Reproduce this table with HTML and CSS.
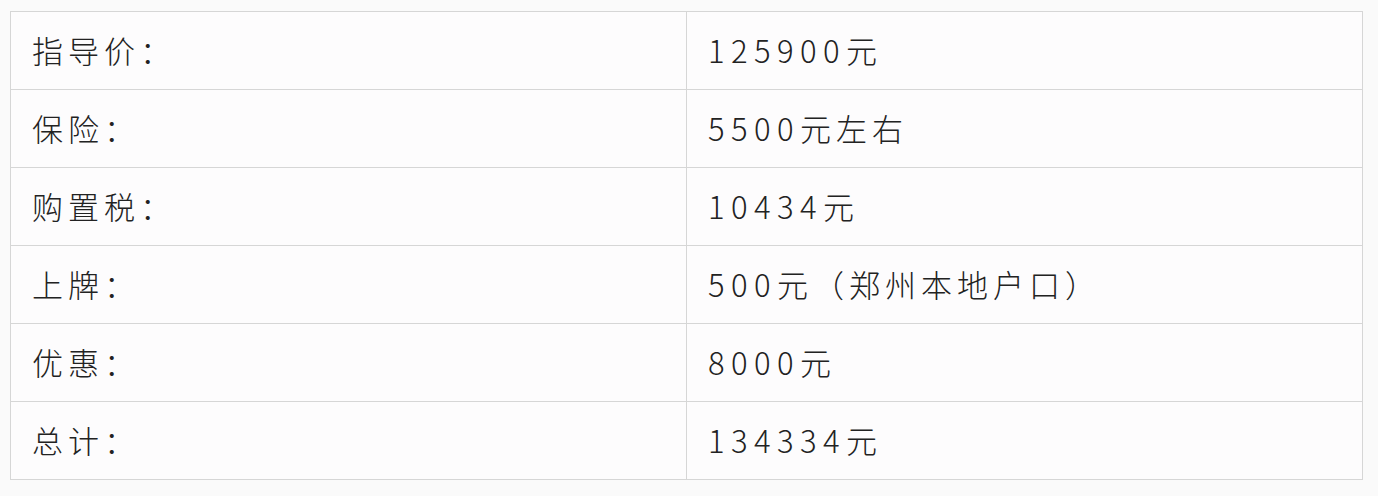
FILE: index.html
```html
<!DOCTYPE html>
<html lang="zh">
<head>
<meta charset="utf-8">
<link rel="stylesheet" href="styles.css">
</head>
<body>
<table class="price-table">
  <tbody>
    <tr><td class="label">指导价：</td><td class="value"><span class="num">125900</span>元</td></tr>
    <tr><td class="label">保险：</td><td class="value"><span class="num">5500</span>元左右</td></tr>
    <tr><td class="label">购置税：</td><td class="value"><span class="num">10434</span>元</td></tr>
    <tr><td class="label">上牌：</td><td class="value"><span class="num">500</span>元（郑州本地户口）</td></tr>
    <tr><td class="label">优惠：</td><td class="value"><span class="num">8000</span>元</td></tr>
    <tr><td class="label">总计：</td><td class="value"><span class="num">134334</span>元</td></tr>
  </tbody>
</table>
</body>
</html>
```
FILE: styles.css
```css
html, body {
  margin: 0;
  background: #fafafa;
}
body {
  padding: 11px 0 0 10px;
  font-family: "Noto Sans CJK SC", "Noto Sans", sans-serif;
  color: #222;
}
.price-table {
  border-collapse: collapse;
  width: 1353px;
  table-layout: fixed;
  background: #fdfcfd;
}
.price-table td {
  border: 1px solid #d6d6d6;
  height: 78px;
  padding: 0 0 2px 21px;
  box-sizing: border-box;
  font-size: 31px;
  font-weight: 300;
  letter-spacing: 5px;
  line-height: 1;
  vertical-align: middle;
}
.price-table .label { width: 676px; }
.price-table .num { letter-spacing: 6.4px; }
```
